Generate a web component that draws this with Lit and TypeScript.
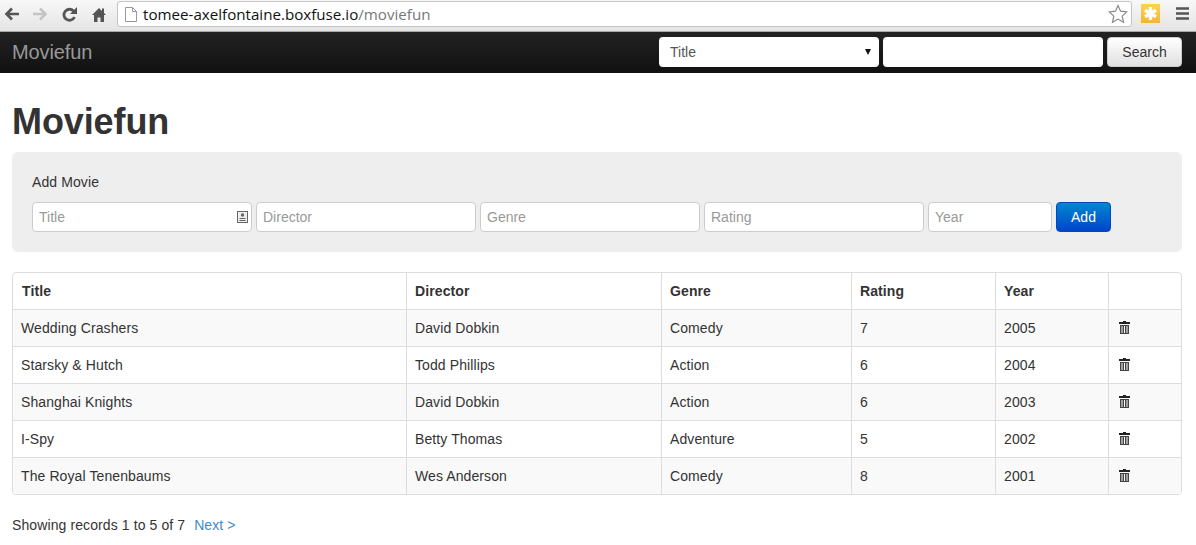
import { LitElement, html, css, svg } from "lit";
import { customElement } from "lit/decorators.js";

const rows = [
  ["Wedding Crashers", "David Dobkin", "Comedy", "7", "2005"],
  ["Starsky & Hutch", "Todd Phillips", "Action", "6", "2004"],
  ["Shanghai Knights", "David Dobkin", "Action", "6", "2003"],
  ["I-Spy", "Betty Thomas", "Adventure", "5", "2002"],
  ["The Royal Tenenbaums", "Wes Anderson", "Comedy", "8", "2001"],
];

const trash = svg`<svg class="trash" width="11" height="13" viewBox="0 0 11 13"><path fill="#222" d="M4 0h3v1h4v2H0V1h4z"/><path fill="#444" fill-rule="evenodd" d="M1 4h9v9H1zM2.500 5v7h1V5zM5 5v7h1V5zM7.500 5v7h1V5z"/></svg>`;

@customElement("app-root")
export class AppRoot extends LitElement {
  static styles = css`
    :host { display: block; width: 1196px; height: 545px; overflow: hidden; background: #fff; font-family: "Liberation Sans", Arial, sans-serif; font-size: 14px; color: #333; }
    * { box-sizing: border-box; }
    .chrome { height: 32px; display: flex; align-items: flex-start; background: linear-gradient(#f8f8f8, #e4e4e4); border-bottom: 1px solid #a8a8a8; }
    .nav-icons { display: flex; align-items: center; width: 117px; height: 28px; padding-left: 4px; gap: 14px; }
    .nav-icons svg { display: block; flex: none; }
    .nav-icons .home { margin-left: 1px; }
    .omni { width: 1015px; height: 26px; margin-top: 1px; background: #fff; border: 1px solid #c4c4c4; border-radius: 3px; display: flex; align-items: center; padding: 0 3px 0 7px; font-family: "Open Sans", "DejaVu Sans", sans-serif; font-size: 15.15px; color: #111; }
    .omni svg { flex: none; margin-right: 6px; }
    .omni .path { color: #777; }
    .omni .star { margin: 0 0 0 auto; }
    .ext { margin: 4px 0 0 9px; width: 19px; height: 19px; display: block; flex: none; }
    .menu { margin: 7px 0 0 16px; display: block; flex: none; }
    .navbar { height: 41px; background: linear-gradient(#222, #111); display: flex; align-items: flex-start; padding: 5px 14px 0 12px; gap: 4px; }
    .brand { font-size: 20px; line-height: 30px; color: #999; margin-right: auto; letter-spacing: -0.1px; }
    .sel { width: 220px; height: 30px; background: #fff; border-radius: 4px; display: flex; align-items: center; justify-content: space-between; padding: 0 8px 0 11px; color: #555; }
    .sel i { width: 0; height: 0; border-left: 3px solid transparent; border-right: 3px solid transparent; border-top: 6px solid #111; }
    .search { width: 220px; height: 30px; background: #fff; border-radius: 4px; }
    .btn-s { width: 75px; height: 30px; border-radius: 4px; border: 1px solid #ccc; background: linear-gradient(#fff, #e0e0e0); display: flex; align-items: center; justify-content: center; color: #333; }
    main { padding: 0 14px 0 12px; }
    h1 { margin: 0; padding-top: 29px; height: 79px; font-size: 36px; line-height: 40px; font-weight: 700; color: #333; letter-spacing: -0.1px; }
    .well { height: 100px; background: #eee; border-radius: 6px; padding: 20px; }
    .well label { display: block; line-height: 20px; margin-bottom: 10px; letter-spacing: 0.1px; }
    .form { display: flex; gap: 4px; }
    .inp { height: 30px; background: #fff; border: 1px solid #ccc; border-radius: 4px; padding: 0 3px 0 6px; display: flex; align-items: center; justify-content: space-between; color: #999; width: 220px; }
    .inp.year { width: 124px; }
    .add { width: 55px; height: 30px; border-radius: 4px; color: #fff; display: flex; align-items: center; justify-content: center; background: linear-gradient(#0088cc, #0044cc); border: 1px solid #0047c0; }
    .tw { margin-top: 20px; border: 1px solid #ddd; border-radius: 4px; overflow: hidden; width: 1170px; }
    table { border-collapse: separate; border-spacing: 0; table-layout: fixed; width: 1168px; letter-spacing: 0.1px; }
    th, td { height: 37px; padding: 0 8px; text-align: left; border-left: 1px solid #ddd; border-top: 1px solid #ddd; font-size: 14px; line-height: 20px; vertical-align: middle; }
    th { height: 36px; border-top: 0; font-weight: 700; }
    th:first-child { padding-left: 9px; }
    th:first-child, td:first-child { border-left: 0; }
    tbody tr:nth-child(odd) td { background: #f9f9f9; }
    .trash { display: block; margin-left: 2px; position: relative; top: -1px; }
    .foot { margin-top: 20px; line-height: 20px; letter-spacing: 0.1px; }
    .foot a { color: #428bca; margin-left: 5px; }
  `;

  render() {
    return html`
      <div class="chrome">
        <div class="nav-icons">
          <svg width="15" height="14" viewBox="0 0 15 14"><path fill="none" stroke="#555" stroke-width="2.600" d="M15 7H3M8 1.500L2.500 7 8 12.500"/></svg>
          <svg width="15" height="14" viewBox="0 0 15 14"><path fill="none" stroke="#c4c4c4" stroke-width="2.600" d="M0 7h12M7 1.500L12.500 7 7 12.500"/></svg>
          <svg width="15" height="15" viewBox="0 0 15 15"><path fill="none" stroke="#555" stroke-width="2.800" d="M12.500 10A5.500 5.500 0 1 1 11.500 4"/><path fill="#555" d="M15 0v7H8z"/></svg>
          <svg class="home" width="14" height="15" viewBox="0 0 14 15"><path fill="#555" d="M7 1L0 8h2v7h3.500v-4.500h3V15H12V8h2l-2-2V1.500h-2v2.500z"/></svg>
        </div>
        <div class="omni">
          <svg width="12" height="15" viewBox="0 0 12 15"><path fill="#fff" stroke="#999" d="M.5.500h7l4 4v10H.5z"/><path fill="none" stroke="#999" d="M7.500.500v4h4"/></svg>
          <span>tomee-axelfontaine.boxfuse.io<span class="path">/moviefun</span></span>
          <svg class="star" width="20" height="20" viewBox="0 0 20 20"><path fill="#fff" stroke="#888" stroke-width="1.200" d="M10 1.500l2.600 5.700 6.200.7-4.600 4.200 1.300 6.100L10 15.100l-5.500 3.100 1.300-6.100L1.200 7.900l6.200-.7z"/></svg>
        </div>
        <svg class="ext" viewBox="0 0 19 19"><defs><linearGradient id="g" x1="0" y1="0" x2="0" y2="1"><stop offset="0" stop-color="#fbd54e"/><stop offset="1" stop-color="#f8b23a"/></linearGradient></defs><rect width="19" height="19" fill="url(#g)"/><path stroke="#fff" stroke-width="3.400" d="M9.500 3v13M3.900 6.250l11.200 6.500M15.100 6.250l-11.200 6.500"/></svg>
        <svg class="menu" width="13" height="13" viewBox="0 0 13 13"><path stroke="#555" stroke-width="2.500" d="M0 1.500h13M0 6.500h13M0 11.500h13"/></svg>
      </div>
      <div class="navbar">
        <div class="brand">Moviefun</div>
        <div class="sel"><span>Title</span><i></i></div>
        <div class="search"></div>
        <div class="btn-s">Search</div>
      </div>
      <main>
        <h1>Moviefun</h1>
        <div class="well">
          <label>Add Movie</label>
          <div class="form">
            <div class="inp">Title
              <svg width="11" height="12" viewBox="0 0 11 12"><rect x=".5" y=".5" width="10" height="11" fill="#eee" stroke="#666"/><circle cx="5.500" cy="4" r="1.700" fill="#666"/><path fill="#666" d="M2.500 7h6v1h-6zM2.500 9h6v1h-6z"/></svg>
            </div>
            <div class="inp">Director</div>
            <div class="inp">Genre</div>
            <div class="inp">Rating</div>
            <div class="inp year">Year</div>
            <div class="add">Add</div>
          </div>
        </div>
        <div class="tw">
          <table>
            <colgroup><col style="width:393px"/><col style="width:255px"/><col style="width:190px"/><col style="width:144px"/><col style="width:113px"/><col style="width:73px"/></colgroup>
            <thead><tr><th>Title</th><th>Director</th><th>Genre</th><th>Rating</th><th>Year</th><th></th></tr></thead>
            <tbody>
              ${rows.map((r) => html`<tr>${r.map((c) => html`<td>${c}</td>`)}<td>${trash}</td></tr>`)}
            </tbody>
          </table>
        </div>
        <div class="foot">Showing records 1 to 5 of 7 <a>Next &gt;</a></div>
      </main>
    `;
  }
}
